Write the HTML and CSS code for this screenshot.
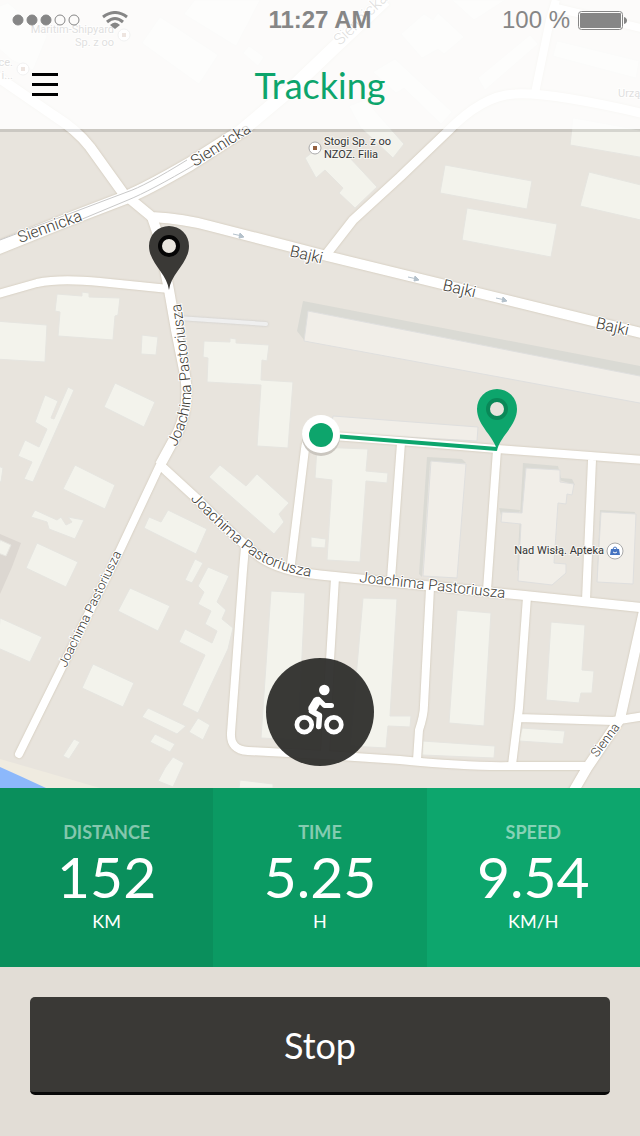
FILE: index.html
```html
<!DOCTYPE html>
<html lang="en">
<head>
<meta charset="UTF-8">
<meta name="viewport" content="width=device-width, initial-scale=1.0">
<title>Tracking</title>
<link rel="stylesheet" href="styles.css">
</head>
<body>
    <main class="map-area">
        <svg class="map" viewBox="0 0 640 788" preserveAspectRatio="xMidYMax slice" role="img" aria-label="Route map">
            <!-- water and shore -->
            <path class="shore" d="M0 759L100 788H0z"/>
            <path class="water" d="M0 767L20 776L46 788H0z"/>
            <path class="block" d="M0 534L21 543L12 567L0 594z"/>

            <g class="building">
                <!-- top, under the header -->
                <path d="M-5 8L8 3L47 36L33 70L12 60L-5 45z"/>
                <path d="M160 17L218 55L199 84L142 43z"/>
                <path d="M195 0H260L236 46L184 14z"/>
                <path d="M249 46L264 57L258 66L243 53z"/>
                <path d="M401 34L424 14L433 20L438 13L464 37L444 54L438 49L422 58z"/>
                <path d="M478 78L530 35L538 44L485 90z"/>
                <path d="M557 41L639 61L636 78L553 56z"/>
                <path d="M452 0H505L474 20z"/>
                <path d="M373 72L395 59L452 112L441 124L404 88L396 93z"/>
                <path d="M349 106L365 100L404 144L393 158L361 128z"/>
                <!-- upper right -->
                <path d="M573 118L645 131V158L570 145z"/>
                <path d="M589 172L645 186V221L580 206z"/>
                <path d="M445 165L532 181L527 209L440 193z"/>
                <path d="M467 208L557 224L551 257L462 240z"/>
                <path d="M305 158L318 148L350 158L377 187L355 208L339 193L343 188L325 170L316 178z"/>
                <!-- left side -->
                <path d="M-5 321L47 325L45 362L-5 359z"/>
                <path d="M57 294L82 296V292L89 293V297L120 298L118 315L115 316L113 340L58 336L60 312L55 311z"/>
                <path d="M142 335L158 337L156 355L141 354z"/>
                <path d="M204 341L230 342V338L236 339V343L269 345L267 361L262 360L261 380L293 382L288 448L257 446L261 385L207 382L208 358L203 357z"/>
                <path d="M115 383L155 402L144 427L104 407z"/>
                <path d="M45 395L58 401L51 418L54 419L68 387L74 390L33 482L24 479L32 462L18 456L25 440L39 447L47 429L35 422z"/>
                <path d="M75 465L115 485L105 509L63 489z"/>
                <path d="M-2 466L3 468L1 482L-2 481z"/>
                <path d="M35 510L57 520L61 517L66 525L72 522L68 517L84 520L75 539L49 529L47 522L31 517z"/>
                <path d="M37 543L78 562L66 587L26 568z"/>
                <path d="M0 540L11 545L6 556L-2 553z"/>
                <path d="M0 618L42 637L30 662L-2 648z"/>
                <path d="M149 517L161 522L168 510L207 529L196 554L144 528z"/>
                <path d="M220 465L246 486L257 474L289 503L279 514L284 522L274 534L209 477z"/>
                <path d="M130 588L170 606L158 631L118 611z"/>
                <path d="M93 664L134 683L123 707L82 688z"/>
                <path d="M195 559L203 563L192 583L185 580z"/>
                <path d="M208 567L229 576L217 602L226 610L222 619L233 628L228 649L198 713L182 705L205 655L179 642L185 629L212 643L217 631L205 624L211 611L198 604L204 592L198 586z"/>
                <path d="M148 708L186 726L177 734L142 717z"/>
                <path d="M155 734L175 744L170 752L150 742z"/>
                <path d="M198 718L210 725L203 740L189 732z"/>
                <path d="M74 739L80 742L69 759L63 756z"/>
                <path d="M173 757L184 763L173 787L158 781L165 768z"/>
                <path d="M240 780L273 784V788H239z"/>
                <!-- lower blocks -->
                <path d="M271 591L305 593L298 740L261 738z"/>
                <path d="M363 598L397 599L390 716L411 716L410 727L388 726L386 748L350 746z"/>
                <path d="M457 610L491 613L484 726L449 723z"/>
                <path d="M423 741L495 746L494 758L422 755z"/>
                <path d="M551 622L585 625L582 670L594 671L592 693L581 693L579 703L546 700z"/>
                <path d="M522 728L565 731L563 744L519 741z"/>
                <path d="M317 447L368 449L366 471L388 473L387 483L366 481L360 562L327 560L332 480L315 478z"/>
                <path d="M311 537L326 539L325 548L311 547z"/>
            </g>

            <!-- raised buildings -->
            <g class="raised-side">
                <path d="M303 301L640 366V376L313 312L304 340L297 331z"/>
                <path d="M427 457L462 459L466 463L430 462L422 577L419 574z"/>
                <path d="M523 463L558 466L561 478L572 479L575 485L527 470L521 574L517 570z"/>
                <path d="M499 508L520 510L518 518L501 515z"/>
                <path d="M600 510L635 512L633 520L601 580L597 576z"/>
            </g>
            <g class="raised">
                <path d="M308 311L645 377V404L304 341z"/>
                <path d="M333 416L478 427L477 441L330 433z"/>
                <path d="M431 461L466 464L457 578L423 576z"/>
                <path d="M526 468L560 470V482L574 484L572 495L567 494L566 504L558 503L554 563L566 564V573L552 585L518 581L521 524L501 522L502 512L522 513z"/>
                <path d="M601 512L636 514L633 584L597 582z"/>
            </g>
            <path class="lane" d="M178 318L266 324"/>

            <g class="roads">
                <path stroke-width="13" d="M-5 249L67 220L127 197Q145 190 190 164L240 132L290 90L335 47L385 0"/>
                <path stroke-width="10" d="M-5 75L53 115Q77 130 90 147L123 193L152 217Q185 219 210 226L327 256L413 277L507 300L645 334"/>
                <path stroke-width="10" d="M152 217L158 235L169 290L176 330L185 375Q190 405 178 432L160 465"/>
                <path class="dead-end" stroke-width="8" d="M160 465L120 550L19 754"/>
                <path stroke-width="8" d="M-5 295L37 283Q60 278 100 282L169 289"/>
                <path stroke-width="9" d="M160 465L196 498Q235 538 260 557Q280 571 320 575L430 586L520 595L645 608"/>
                <path stroke-width="9" d="M325 256L353 220L400 177L447 132Q483 95 515 94Q550 92 645 114"/>
                <path stroke-width="8" d="M535 93L550 20L556 0M552 7L645 29"/>
                <path stroke-width="8" d="M320 435L400 441L497 449L645 460"/>
                <path stroke-width="8" d="M320 436Q306 436 305 449L290 572M401 443L391 579M497 450L487 590M592 460L586 600"/>
                <path stroke-width="8" d="M245 547L243 570L231 733Q230 750 248 751L325 755L400 760Q470 767 512 766L587 766"/>
                <path stroke-width="8" d="M335 578L330 660L325 754M430 588L424 705Q424 715 419 730L417 760M527 597L519 708L512 765M519 718L613 721L645 716"/>
                <path stroke-width="10" d="M645 606L620 719L587 768L573 792"/>
            </g>
            <path class="rail" d="M80 220L128 200Q150 191 196 164L250 133M0 240L127 192Q145 186 187 160"/>

            <g class="arrow">
                <path d="M233 234L242 236M240 233L244 237L239 238z"/>
                <path d="M408 277L417 279M415 276L419 280L414 281z"/>
                <path d="M496 298L505 300M503 297L507 301L502 302z"/>
            </g>

            <g class="street">
                <path id="north" class="guide" d="M176 447Q192 415 191 390Q189 360 179 290"/>
                <path id="middle" class="guide" d="M190 499Q230 540 250 554Q275 573 330 580"/>
                <path id="south" class="guide" d="M359 582L530 601"/>
                <path id="west" class="guide" d="M66 668L132 532"/>
                <text><textPath href="#north">Joachima Pastoriusza</textPath></text>
                <text><textPath href="#middle">Joachima Pastoriusza</textPath></text>
                <text><textPath href="#south">Joachima Pastoriusza</textPath></text>
                <text class="small"><textPath href="#west">Joachima Pastoriusza</textPath></text>
                <text transform="translate(20 243) rotate(-20)">Siennicka</text>
                <text transform="translate(195 167) rotate(-32)">Siennicka</text>
                <text transform="translate(340 46) rotate(-44)">Siennicka</text>
                <text transform="translate(289 256) rotate(13)">Bajki</text>
                <text transform="translate(442 290) rotate(13)">Bajki</text>
                <text transform="translate(595 328) rotate(13)">Bajki</text>
                <text class="small" transform="translate(597 758) rotate(-53)">Sienna</text>
            </g>

            <g class="place">
                <text x="324" y="145">Stogi Sp. z oo</text>
                <text x="324" y="158">NZOZ. Filia</text>
                <text x="604" y="554" text-anchor="end">Nad Wisłą. Apteka</text>
                <text x="114" y="33" text-anchor="end">Maritim-Shipyard</text>
                <text x="114" y="46" text-anchor="end">Sp. z oo</text>
                <text x="13" y="66" text-anchor="end">ce.</text>
                <text x="13" y="79" text-anchor="end">i...</text>
                <text x="618" y="97">Urzą</text>
                <circle cx="315" cy="148" r="6"/>
                <circle cx="124" cy="35" r="6"/>
                <circle cx="23" cy="69" r="6"/>
                <circle cx="615" cy="551" r="8"/>
            </g>
            <path class="dot" d="M313 146h4v4h-4zM122 33h4v4h-4zM21 67h4v4h-4z"/>
            <path class="shop" d="M611 549h8l1 6h-10z"/>
            <path class="shop-handle" d="M613 550Q613 547 615 547T617 550"/>
            <path class="shop-smile" d="M613 552Q615 554 617 552"/>

            <!-- route -->
            <path class="route" d="M321 435L497 449"/>
            <circle class="position-shadow" cx="321" cy="437" r="19"/>
            <circle class="position-ring" cx="321" cy="434" r="19"/>
            <circle class="position" cx="321" cy="435" r="12"/>
            <g class="pin pin-start">
                <path d="M169 290C167 273 149 263 149 246A20 20 0 0 1 189 246C189 263 171 273 169 290z"/>
                <circle cx="169" cy="246" r="9"/>
            </g>
            <g class="pin pin-end">
                <path d="M497 451C495 437 477 426 477 409A20 20 0 0 1 517 409C517 426 499 437 497 451z"/>
                <circle cx="497" cy="409" r="9"/>
            </g>
        </svg>

        <header class="header">
            <div class="status">
                <div class="status-left">
                    <svg width="68" height="12" viewBox="0 0 68 12" aria-hidden="true">
                        <g fill="#868686" stroke="#868686">
                            <circle cx="6" cy="6" r="5"/>
                            <circle cx="20" cy="6" r="5"/>
                            <circle cx="34" cy="6" r="5"/>
                            <circle cx="48" cy="6" r="5" fill="none"/>
                            <circle cx="62" cy="6" r="5" fill="none"/>
                        </g>
                    </svg>
                    <svg width="26" height="18" viewBox="0 0 26 18" aria-hidden="true">
                        <g fill="none" stroke="#868686" stroke-width="3">
                            <path d="M1 6Q13 -3 25 6"/>
                            <path d="M5 11Q13 4 21 11"/>
                        </g>
                        <path d="M8 14Q13 9 18 14L13 18z" fill="#868686"/>
                    </svg>
                </div>
                <div class="clock">11:27 AM</div>
                <div class="status-right">
                    <span>100 %</span>
                    <svg width="50" height="20" viewBox="0 0 50 20" aria-hidden="true">
                        <rect x="0.5" y="1.5" width="44" height="18" rx="3" fill="none" stroke="#868686"/>
                        <rect x="2" y="3" width="41" height="15" rx="1" fill="#868686"/>
                        <path d="M46 7Q49 8 49 10.5T46 14z" fill="#868686"/>
                    </svg>
                </div>
            </div>
            <div class="title-bar">
                <button class="menu" type="button" aria-label="Menu">
                    <span></span>
                    <span></span>
                    <span></span>
                </button>
                <h1>Tracking</h1>
            </div>
        </header>

        <button class="activity" type="button" aria-label="Cycling">
            <svg viewBox="6 7 108 108" aria-hidden="true">
                <g fill="none" stroke="#fff" stroke-linecap="round" stroke-linejoin="round">
                    <circle cx="44.3" cy="73.7" r="7.4" stroke-width="4.7"/>
                    <circle cx="73.9" cy="73.7" r="7.4" stroke-width="4.7"/>
                    <path stroke-width="8.5" d="M57 50L52.5 57.5"/>
                    <path stroke-width="5" d="M58.5 48.5L64.5 54.5L71.5 54.5"/>
                    <path stroke-width="5.5" d="M51.5 60L59.5 64.5L58.7 75.5"/>
                </g>
                <circle cx="64.3" cy="39" r="5.3" fill="#fff"/>
            </svg>
        </button>
    </main>

    <section class="stats">
        <div class="stat distance">
            <h2>DISTANCE</h2>
            <p class="value">152</p>
            <p class="unit">KM</p>
        </div>
        <div class="stat time">
            <h2>TIME</h2>
            <p class="value">5.25</p>
            <p class="unit">H</p>
        </div>
        <div class="stat speed">
            <h2>SPEED</h2>
            <p class="value">9.54</p>
            <p class="unit">KM/H</p>
        </div>
    </section>

    <footer class="footer">
        <button class="stop" type="button">Stop</button>
    </footer>
</body>
</html>
```
FILE: styles.css
```css
* {
    box-sizing: border-box;
}
body {
    display: flex;
    flex-direction: column;
    min-height: 100vh;
    margin: 0;
    font-family: Lato, sans-serif;
    background: #e2ddd6;
}
h1, h2, p {
    margin: 0;
    font-weight: 400;
}
button {
    border: none;
    padding: 0;
    font-family: inherit;
    cursor: pointer;
}

/* map */
.map-area {
    position: relative;
    flex: 1;
    min-height: 400px;
    overflow: hidden;
    background: #e8e4dd;
}
.map {
    position: absolute;
    width: 100%;
    height: 100%;
}
.shore { fill: #efebe0; }
.water { fill: #8cb8fb; }
.block { fill: #dcd7d1; }
.building {
    fill: #f3f3ec;
    stroke: #e6e5e0;
}
.raised {
    fill: #f1eee8;
    stroke: #dfdfde;
}
.raised-side { fill: #dadad4; }
.lane {
    stroke: #efefef;
    stroke-width: 4;
    stroke-linecap: round;
    filter: drop-shadow(0 0 1px #c8c8c8);
}
.roads {
    fill: none;
    stroke: #fff;
    stroke-linejoin: round;
    filter: drop-shadow(0 0 1px #c9bfac);
}
.dead-end { stroke-linecap: round; }
.rail {
    fill: none;
    stroke: #c9c9c9;
}
.arrow {
    fill: #b4c1cb;
    stroke: #b4c1cb;
    stroke-width: 1;
}
.guide { fill: none; }
.street text {
    font-family: Roboto, sans-serif;
    font-size: 16px;
    font-weight: 300;
    fill: #3c3a33;
    stroke: #fff;
    stroke-width: 2px;
    paint-order: stroke;
}
.street textPath {
    font-size: 15px;
}
.street .small, .street .small textPath {
    font-size: 13px;
}
.place text {
    font-family: Roboto, sans-serif;
    font-size: 11px;
    fill: #333;
    stroke: #f6f4f0;
    stroke-width: 2px;
    paint-order: stroke;
}
.place circle {
    fill: #fff;
    stroke: #aaa;
}
.dot { fill: #94603f; }
.shop { fill: #4674c1; }
.shop-handle {
    fill: none;
    stroke: #4674c1;
}
.shop-smile {
    fill: none;
    stroke: #fff;
}
.route {
    stroke: #0da56c;
    stroke-width: 4;
}
.position-shadow { fill: #cac6bf; }
.position-ring { fill: #fff; }
.position { fill: #0da56c; }
.pin circle {
    fill: #e8e4dd;
    stroke-width: 4;
}
.pin-start { fill: #3a3936; }
.pin-start circle { stroke: #050505; }
.pin-end { fill: #0da56c; }
.pin-end circle { stroke: #0a8858; }

/* header over the map */
.header {
    position: absolute;
    top: 0;
    left: 0;
    right: 0;
    background: rgba(255, 255, 255, 0.84);
    background-clip: padding-box;
    border-bottom: 3px solid rgba(0, 0, 0, 0.12);
}
.status {
    display: grid;
    grid-template-columns: 1fr auto 1fr;
    align-items: center;
    height: 40px;
    padding: 0 12px;
    font-family: "Liberation Sans", Arial, sans-serif;
    font-size: 24px;
    color: #868686;
}
.status-left, .status-right {
    display: flex;
    align-items: center;
}
.status-left {
    gap: 22px;
}
.status-right {
    justify-content: flex-end;
    gap: 8px;
}
.clock {
    font-weight: 700;
}
.title-bar {
    display: grid;
    grid-template-columns: 26px 1fr 26px;
    align-items: center;
    height: 89px;
    padding: 0 32px;
}
.menu {
    display: flex;
    flex-direction: column;
    gap: 7px;
    background: none;
}
.menu span {
    width: 26px;
    height: 3px;
    background: #000;
}
h1 {
    font-size: 36px;
    text-align: center;
    color: #0da56c;
}

.activity {
    position: absolute;
    bottom: 22px;
    left: 50%;
    width: 108px;
    height: 108px;
    margin-left: -54px;
    border-radius: 50%;
    background: rgba(45, 45, 43, 0.94);
}
.activity svg {
    display: block;
}

/* stats */
.stats {
    display: grid;
    grid-template-columns: 1fr 1fr 1fr;
    color: #fff;
    text-align: center;
}
.stat {
    padding: 32px 0 34px;
}
.distance { background: #0a8f5c; }
.time { background: #0b9a63; }
.speed { background: #0da66d; }
.stat h2 {
    font-size: 18px;
    line-height: 24px;
    font-weight: 700;
    color: rgba(255, 255, 255, 0.5);
}
.value {
    font-size: 57px;
    line-height: 65px;
}
.unit {
    font-size: 18px;
    line-height: 24px;
}

.footer {
    padding: 30px 30px 41px;
}
.stop {
    width: 100%;
    height: 98px;
    border-bottom: 3px solid #080808;
    border-radius: 5px;
    background: #3a3936;
    color: #fff;
    font-size: 36px;
}
```
